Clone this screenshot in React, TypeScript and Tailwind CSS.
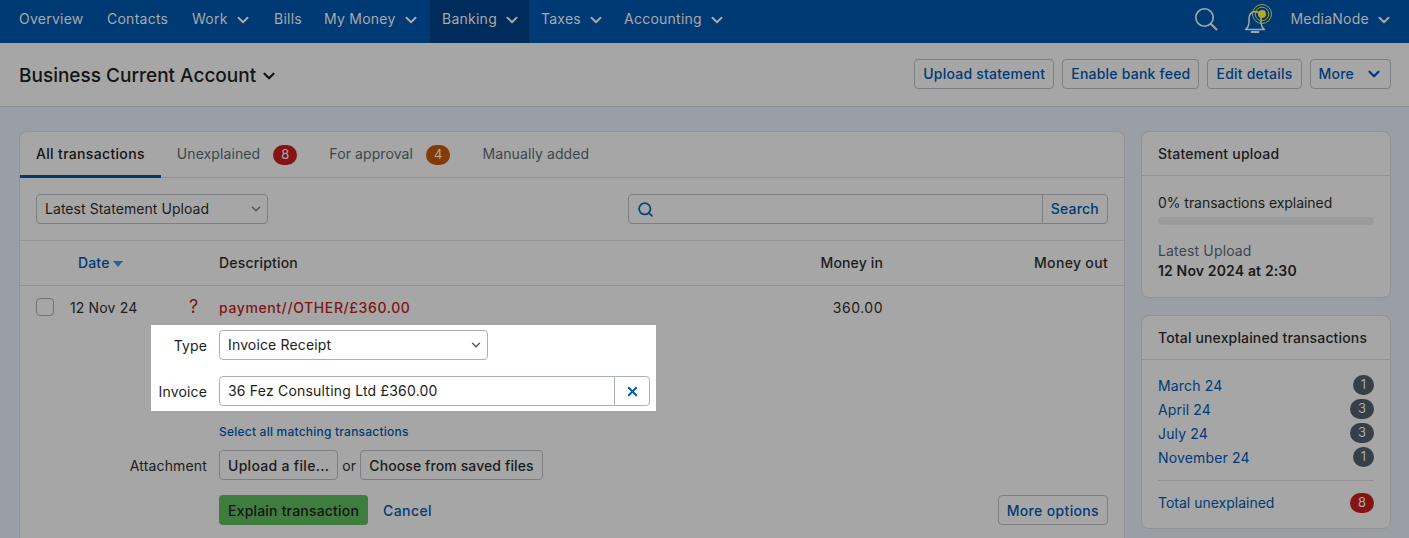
import { ChevronDown, Search, X } from "lucide-react";

function NavItem({ label, caret, active, width }: { label: string; caret?: boolean; active?: boolean; width?: string }) {
  return (
    <div className={`flex h-full shrink-0 items-center gap-[8px] pb-[6px] pl-3 tracking-[0.25px] text-[#a9a9a9] ${width ?? "pr-3"} ${active ? "bg-[#002c5c]" : ""}`}>
      <span>{label}</span>
      {caret && <ChevronDown size={18} strokeWidth={2.5} className="-ml-[2px] mt-[3px] text-[#a9a9a9]" />}
    </div>
  );
}

function HeaderButton({ children }: { children: React.ReactNode }) {
  return (
    <div className="flex h-[30px] items-center gap-[6px] rounded-[4px] border border-[#7d7f82] px-2 font-medium tracking-[0.22px] text-[#013a75]">
      {children}
    </div>
  );
}

function CountBadge({ n, color = "bg-[#363f47]" }: { n: number; color?: string }) {
  return (
    <span className={`flex h-5 items-center justify-center rounded-full px-2 text-[13px] tracking-normal text-[#a9a9a9] ${color}`}>
      {n}
    </span>
  );
}

export default function App() {
  return (
    <div className="h-[538px] overflow-hidden bg-[#9a9ea5] font-['Inter',sans-serif] text-[14px] tracking-[0.15px] text-[#1c1c1c]">
      <nav className="flex h-[43px] items-center bg-[#003a75] pl-[7px] pr-[18px]">
        <NavItem label="Overview" width="w-[88px]" />
        <NavItem label="Contacts" width="w-[85px]" />
        <NavItem label="Work" caret width="w-[82px]" />
        <NavItem label="Bills" width="w-[50px]" />
        <NavItem label="My Money" caret width="w-[118px]" />
        <NavItem label="Banking" caret active width="w-[99px]" />
        <NavItem label="Taxes" caret width="w-[83px]" />
        <NavItem label="Accounting" caret />
        <div className="ml-auto flex items-center pb-[5px] text-[#a9a9a9]">
          <svg width="23" height="23" viewBox="0 0 23 23" fill="none">
            <circle cx="9.500" cy="9.500" r="8.700" stroke="#a9a9a9" strokeWidth="1.600" />
            <path d="M16 16l5.500 5.500" stroke="#a9a9a9" strokeWidth="1.800" strokeLinecap="round" />
          </svg>
          <svg width="32" height="32" viewBox="0 0 32 32" fill="none" className="ml-[24px]">
            <path d="M3.500 26.500c2-1.500 3.500-3.500 3.500-8v-3c0-4 2.500-7 6-7s6 3 6 7v3c0 4.500 1.500 6.500 3.500 8z" stroke="#a9a9a9" strokeWidth="1.500" strokeLinejoin="round" />
            <path d="M9.500 29h7" stroke="#a9a9a9" strokeWidth="1.800" strokeLinecap="round" />
            <circle cx="20" cy="11" r="4" fill="#b8a81c" />
            <circle cx="20" cy="11" r="6.800" stroke="#b8a81c" strokeWidth="0.900" />
            <circle cx="20" cy="11" r="9.500" stroke="#b8a81c" strokeWidth="0.900" />
          </svg>
          <span className="-mt-px ml-[16px] tracking-[0.25px]">MediaNode</span>
          <ChevronDown size={18} strokeWidth={2.5} className="ml-[6px] -mr-[2px] mt-[2px]" />
        </div>
      </nav>

      <header className="flex h-[64px] items-center justify-between border-b border-[#8c8e91] bg-[#a6a6a6] pb-px pl-[19px] pr-[18px]">
        <div className="mt-[4px] flex items-center text-[19px] font-medium tracking-normal text-[#141414]">
          Business Current Account
          <ChevronDown size={18} strokeWidth={3} className="ml-[4px]" />
        </div>
        <div className="-mt-px flex gap-2">
          <HeaderButton>Upload statement</HeaderButton>
          <HeaderButton>Enable bank feed</HeaderButton>
          <HeaderButton>Edit details</HeaderButton>
          <HeaderButton>
            More <ChevronDown size={18} strokeWidth={3} className="ml-[5px] -mr-[1px]" />
          </HeaderButton>
        </div>
      </header>

      <main className="flex gap-4 pl-[19px] pr-[18px] pt-6">
        <section className="h-[500px] w-[1106px] shrink-0 rounded-[8px] border border-[#909296] bg-[#a6a6a6]">
          <div className="flex h-[46px] items-stretch border-b border-[#909296]">
            <div className="-mb-px flex items-center border-b-[3px] border-[#003a75] px-4 font-medium tracking-[0.33px] text-[#141414]">All transactions</div>
            <div className="ml-4 flex items-center gap-[13px] text-[#3d464e]">
              <span className="-mt-[2px] tracking-[0.1px]">Unexplained</span>
              <CountBadge n={8} color="bg-[#851414]" />
            </div>
            <div className="ml-8 flex items-center gap-[13px] text-[#3d464e]">
              <span className="-mt-[2px] tracking-[0.1px]">For approval</span>
              <CountBadge n={4} color="bg-[#853b05]" />
            </div>
            <div className="ml-8 flex items-center pb-[3px] tracking-[0.1px] text-[#3d464e]">Manually added</div>
          </div>

          <div className="flex h-[63px] items-center justify-between border-b border-[#909296] px-4">
            <div className="flex h-[30px] w-[232px] items-center justify-between rounded-[4px] border border-[#7d7f82] pb-px pl-2 pr-1 tracking-[0.05px]">
              Latest Statement Upload
              <ChevronDown size={14} strokeWidth={2.5} className="text-[#50555b]" />
            </div>
            <div className="flex h-[30px] w-[480px] items-center rounded-[4px] border border-[#7d7f82]">
              <Search size={17} strokeWidth={2.5} className="ml-2 text-[#00467a]" />
              <div className="ml-auto flex h-full items-center border-l border-[#7d7f82] px-2 pb-px font-medium tracking-[0.2px] text-[#013a75]">Search</div>
            </div>
          </div>

          <div className="flex h-[45px] items-center border-b border-[#909296] pb-px font-medium">
            <div className="flex w-[199px] items-center pl-[58px] text-[#013a75]">
              Date
              <span className="ml-[3px] mt-[2px] h-0 w-0 border-x-[5px] border-t-[6px] border-x-transparent border-t-[#2b6295]" />
            </div>
            <div className="flex-1 tracking-[0.18px]">Description</div>
            <div className="w-[100px] text-right">Money in</div>
            <div className="w-[241px] pr-4 text-right tracking-[0.33px]">Money out</div>
          </div>

          <div className="flex h-[39px] items-center pt-[3px]">
            <div className="ml-4 h-[18px] w-[18px] rounded-[4px] border border-[#6f7276]" />
            <div className="ml-4 w-[119px]">12 Nov 24</div>
            <div className="w-[30px] text-[18px] leading-none text-[#801414]">?</div>
            <div className="flex-1 font-medium tracking-[0.6px] text-[#801414]">payment//OTHER/£360.00</div>
            <div className="w-[100px] text-right tracking-[0.5px]">360.00</div>
            <div className="w-[241px]" />
          </div>

          <div className="ml-[131px] flex h-[86px] w-[505px] flex-col justify-between bg-white py-[5px]">
            <div className="flex items-center">
              <div className="w-[68px] pr-3 text-right">Type</div>
              <div className="flex h-[30px] w-[269px] items-center justify-between rounded-[4px] border border-[#a9b0b7] pb-px pl-2 pr-1">
                Invoice Receipt
                <ChevronDown size={14} strokeWidth={2.5} className="text-[#555a60]" />
              </div>
            </div>
            <div className="flex items-center">
              <div className="w-[68px] pr-3 text-right">Invoice</div>
              <div className="flex h-[30px] w-[431px] items-center justify-between rounded-[4px] border border-[#a9b0b7]">
                <span className="-mt-px pl-2 tracking-[0.2px]">36 Fez Consulting Ltd £360.00</span>
                <div className="flex h-full w-[35px] items-center justify-center border-l border-[#a9b0b7] text-[#005fb3]">
                  <X size={15} strokeWidth={3} />
                </div>
              </div>
            </div>
          </div>

          <div className="ml-[199px] mt-[13px] text-[12px] font-medium leading-[16px] tracking-[0.22px] text-[#013a75]">Select all matching transactions</div>

          <div className="mt-[10px] flex items-center">
            <div className="w-[199px] pr-3 text-right">Attachment</div>
            <div className="flex h-[30px] items-center rounded-[4px] border border-[#7d7f82] px-2 font-medium tracking-[0.3px]">Upload a file...</div>
            <span className="mx-[4px]">or</span>
            <div className="flex h-[30px] items-center rounded-[4px] border border-[#7d7f82] px-2 font-medium tracking-[0.1px]">Choose from saved files</div>
          </div>

          <div className="mt-[15px] flex items-center pl-[199px] pr-4">
            <div className="flex h-[30px] items-center rounded-[4px] bg-[#3f7d3e] px-[9px] font-medium tracking-[0.2px] text-[#141414]">Explain transaction</div>
            <div className="ml-[15px] font-medium tracking-[0.4px] text-[#013a75]">Cancel</div>
            <div className="ml-auto flex h-[30px] items-center rounded-[4px] border border-[#7d7f82] px-2 font-medium tracking-[0.35px] text-[#013a75]">More options</div>
          </div>
        </section>

        <aside className="flex w-[250px] shrink-0 flex-col gap-[17px]">
          <div className="h-[167px] rounded-[8px] border border-[#909296] bg-[#a6a6a6]">
            <div className="flex h-[44px] items-center border-b border-[#909296] px-4 font-medium tracking-[0.2px]">Statement upload</div>
            <div className="px-4 pt-[17px]">
              <div className="leading-[20px] tracking-[-0.05px]">0% transactions explained</div>
              <div className="mt-[4px] h-2 rounded-full bg-[#9a9b9d]" />
              <div className="mt-[16px] leading-[20px] text-[#3d464e]">Latest Upload</div>
              <div className="font-semibold leading-[20px]">12 Nov 2024 at 2:30</div>
            </div>
          </div>
          <div className="h-[214px] rounded-[8px] border border-[#909296] bg-[#a6a6a6]">
            <div className="flex h-[44px] items-center border-b border-[#909296] px-4 pb-px font-medium">Total unexplained transactions</div>
            <div className="px-4 pt-[13px]">
              {[
                ["March 24", 1],
                ["April 24", 3],
                ["July 24", 3],
                ["November 24", 1],
              ].map(([label, n]) => (
                <div key={label} className="flex h-6 items-center justify-between text-[#013a75]">
                  {label}
                  <CountBadge n={n as number} />
                </div>
              ))}
              <div className="mt-[11px] flex items-center justify-between border-t border-[#909296] pt-[11px] tracking-normal text-[#013a75]">
                Total unexplained
                <CountBadge n={8} color="bg-[#851414]" />
              </div>
            </div>
          </div>
        </aside>
      </main>
    </div>
  );
}
